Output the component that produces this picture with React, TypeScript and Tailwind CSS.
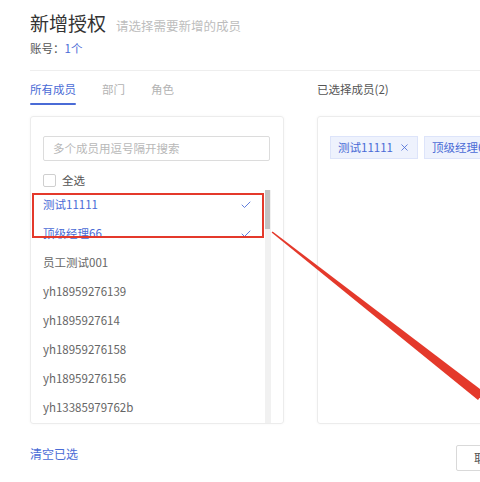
import { Check, X } from "lucide-react";

const members = [
  { name: "测试11111", picked: true },
  { name: "顶级经理66", picked: true },
  { name: "员工测试001", picked: false },
  { name: "yh18959276139", picked: false },
  { name: "yh1895927614", picked: false },
  { name: "yh18959276158", picked: false },
  { name: "yh18959276156", picked: false },
  { name: "yh13385979762b", picked: false },
];

const font = { fontFamily: '"Noto Sans CJK SC", "Noto Sans", sans-serif' };

function Tag({ label }: { label: string }) {
  return (
    <span className="flex h-[23px] shrink-0 items-center gap-[6px] border border-[#dde4fa] bg-[#eef2fd] px-[7px] text-[11.5px] text-[#4a6bd6]">
      {label}
      <X className="size-[11px]" strokeWidth={1.8} />
    </span>
  );
}

export default function App() {
  return (
    <div className="relative h-[482px] w-[480px] overflow-hidden bg-white text-[#333]" style={font}>
      <div className="w-[620px] pl-[30px]">
        {/* header */}
        <div className="flex items-baseline gap-[10px] pt-[8px]">
          <h1 className="text-[19px] leading-[30px] text-[#333]">新增授权</h1>
          <span className="text-[12.5px] text-[#bdbdbd]">请选择需要新增的成员</span>
        </div>
        <p className="mt-[1px] text-[11.5px] leading-[18px] text-[#555]">
          账号：<span className="text-[#4a6bd6]">1个</span>
        </p>
        <div className="mt-[13px] h-px bg-[#eeeeee]" />

        {/* two columns */}
        <div className="mt-[9px] grid grid-cols-[254px_1fr] gap-x-[33px]">
          <div className="flex gap-[26px] text-[11.5px]">
            <span className="flex flex-col gap-[5px] text-[#4a6bd6]">
              <span className="leading-[18px]">所有成员</span>
              <span className="h-[2px] rounded-full bg-[#4a6bd6]" />
            </span>
            <span className="leading-[18px] text-[#b3b3b3]">部门</span>
            <span className="leading-[18px] text-[#b3b3b3]">角色</span>
          </div>
          <div className="text-[11.5px] leading-[18px] text-[#555]">已选择成员(2)</div>

          {/* member picker */}
          <div className="mt-[11px] h-[308px] overflow-hidden rounded-[3px] border border-[#ececec] shadow-[0_0_3px_rgba(0,0,0,0.04)]">
            <div className="pl-[12px] pr-[13px] pt-[19px]">
              <div className="flex h-[25px] items-center rounded-[2px] border border-[#dcdcdc] px-[9px] text-[11.5px] text-[#b8b8b8]">
                多个成员用逗号隔开搜索
              </div>
              <label className="mt-[11px] flex items-center gap-[6px] text-[11.5px] leading-[16px] text-[#555]">
                <span className="size-[13px] rounded-[2px] border border-[#cfcfcf]" />
                全选
              </label>
            </div>
            <div className="mt-[2px] flex h-[240px] pr-[12px]">
              <ul className="flex-1">
                {members.map((m) => (
                  <li
                    key={m.name}
                    className={`flex h-[29px] items-center justify-between pl-[12px] pr-[13px] text-[11.5px] ${
                      m.picked ? "text-[#4a6bd6]" : "text-[#666]"
                    }`}
                  >
                    {m.name}
                    {m.picked && <Check className="size-[12px] text-[#4f6fd8]" strokeWidth={1.8} />}
                  </li>
                ))}
              </ul>
              <div className="w-[6px] bg-[#f1f1f1]">
                <div className="h-[39px] w-[5px] bg-[#c2c2c2]" />
              </div>
            </div>
          </div>

          {/* picked members */}
          <div className="mt-[11px] h-[308px] rounded-[3px] border border-[#ececec] shadow-[0_0_3px_rgba(0,0,0,0.04)]">
            <div className="flex gap-[6px] pl-[12px] pt-[19px]">
              <Tag label="测试11111" />
              <Tag label="顶级经理66" />
            </div>
          </div>
        </div>

        {/* footer */}
        <div className="mt-[21px] flex items-start justify-between pr-[104px]">
          <span className="text-[12px] leading-[18px] text-[#4a6bd6]">清空已选</span>
          <button
            type="button"
            className="h-[26px] w-[60px] rounded-[2px] border border-[#d9d9d9] text-[12px] text-[#555]"
          >
            取消
          </button>
        </div>
      </div>

      {/* annotation: highlight box and arrow */}
      <div className="pointer-events-none absolute left-[32px] top-[193px] h-[45px] w-[232px] border-2 border-[#e4392b]" />
      <svg className="pointer-events-none absolute inset-0" width="480" height="482" viewBox="0 0 480 482">
        <polygon points="271.6,232.6 272.6,231.6 484,392 478,400" fill="#e4392b" />
      </svg>
    </div>
  );
}
